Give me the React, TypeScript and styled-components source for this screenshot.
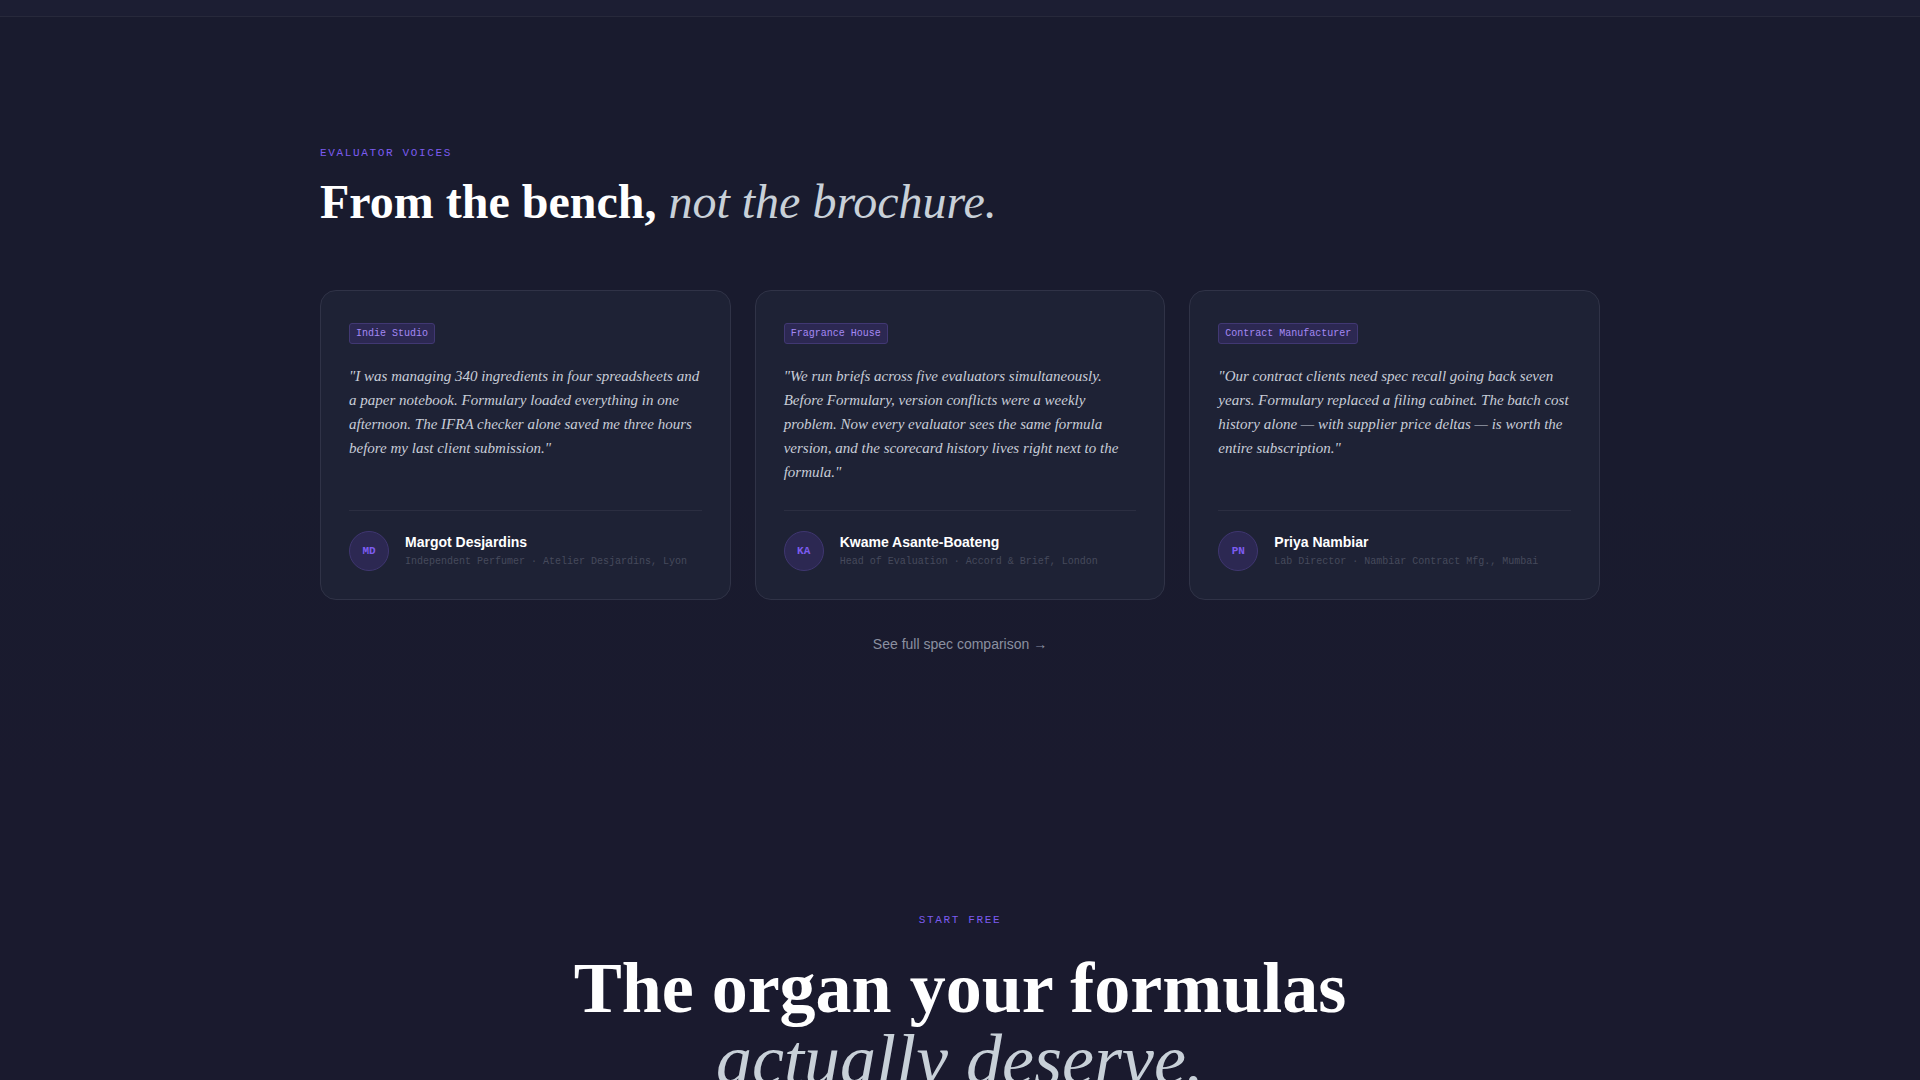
import React from "react";
import styled, { createGlobalStyle } from "styled-components";

const serif = '"Liberation Serif", "Times New Roman", serif';
const sans = '"Liberation Sans", Arial, sans-serif';
const mono = '"Liberation Mono", "Courier New", monospace';

const GlobalStyle = createGlobalStyle`
  *, *::before, *::after { box-sizing: border-box; }
  body { margin: 0; background: #1a1a2e; color: #fff; font-family: ${sans}; }
  h2, p, blockquote, figure { margin: 0; }
`;

const PreviousSection = styled.div`
  height: 17px;
  background: #1c1e33;
  border-bottom: 1px solid #27293b;
`;

const Section = styled.section`
  padding: 128px 40px;
  background: linear-gradient(#191b2e 60%, #1a1a2e);
`;

const Container = styled.div`
  max-width: 1280px;
  margin: 0 auto;
`;

const Eyebrow = styled.p`
  font: 400 11px/16px ${mono};
  letter-spacing: 0.15em;
  text-transform: uppercase;
  color: #7c5cf0;
`;

const Heading = styled.h2`
  margin-top: 13px;
  font: 700 48px/56px ${serif};
  em { font-weight: 400; color: #c8d0d8; }
`;

const Cards = styled.div`
  display: grid;
  grid-template-columns: repeat(3, 1fr);
  gap: 24px;
  margin-top: 60px;
`;

const Card = styled.figure`
  display: flex;
  flex-direction: column;
  align-items: flex-start;
  padding: 32px 28px 28px;
  background: #1e2235;
  border: 1px solid #303347;
  border-radius: 16px;
`;

const Tag = styled.span`
  padding: 3px 6px;
  font: 400 10px/13px ${mono};
  color: #a488f4;
  background: #2c2852;
  border: 1px solid #413873;
  border-radius: 3px;
`;

const Quote = styled.blockquote`
  flex: 1;
  margin: 20px 0 26px;
  font: italic 400 15px/24px ${serif};
  color: #c8cdd8;
`;

const Author = styled.figcaption`
  display: flex;
  align-items: center;
  align-self: stretch;
  gap: 16px;
  padding-top: 20px;
  border-top: 1px solid #2b2e41;
`;

const Avatar = styled.span`
  display: grid;
  place-items: center;
  width: 40px;
  height: 40px;
  font: 700 11px/16px ${mono};
  color: #7c5cf0;
  background: #2c2852;
  border: 1px solid #3f3670;
  border-radius: 50%;
`;

const Name = styled.p`
  font: 700 14px/22px ${sans};
`;

const Role = styled.p`
  font: 400 10px/18px ${mono};
  color: #464a5c;
`;

const More = styled.p`
  margin-top: 32px;
  text-align: center;
`;

const MoreLink = styled.a`
  font: 400 14px/24px ${sans};
  color: #8b90a0;
  text-decoration: none;
`;

const Closing = styled.section`
  padding: 128px 40px;
  text-align: center;
`;

const ClosingHeading = styled.h2`
  margin-top: 24px;
  font: 700 72px/72px ${serif};
  em { display: block; font-weight: 400; color: #c8d0d8; }
`;

const voices = [
  {
    tag: "Indie Studio",
    quote:
      "I was managing 340 ingredients in four spreadsheets and a paper notebook. Formulary loaded everything in one afternoon. The IFRA checker alone saved me three hours before my last client submission.",
    initials: "MD",
    name: "Margot Desjardins",
    role: "Independent Perfumer · Atelier Desjardins, Lyon",
  },
  {
    tag: "Fragrance House",
    quote:
      "We run briefs across five evaluators simultaneously. Before Formulary, version conflicts were a weekly problem. Now every evaluator sees the same formula version, and the scorecard history lives right next to the formula.",
    initials: "KA",
    name: "Kwame Asante-Boateng",
    role: "Head of Evaluation · Accord & Brief, London",
  },
  {
    tag: "Contract Manufacturer",
    quote:
      "Our contract clients need spec recall going back seven years. Formulary replaced a filing cabinet. The batch cost history alone — with supplier price deltas — is worth the entire subscription.",
    initials: "PN",
    name: "Priya Nambiar",
    role: "Lab Director · Nambiar Contract Mfg., Mumbai",
  },
];

export default function App() {
  return (
    <>
      <GlobalStyle />
      <PreviousSection />
      <main>
        <Section>
          <Container>
            <Eyebrow>Evaluator Voices</Eyebrow>
            <Heading>
              From the bench, <em>not the brochure.</em>
            </Heading>
            <Cards>
              {voices.map((voice) => (
                <Card key={voice.name}>
                  <Tag>{voice.tag}</Tag>
                  <Quote>{`"${voice.quote}"`}</Quote>
                  <Author>
                    <Avatar>{voice.initials}</Avatar>
                    <div>
                      <Name>{voice.name}</Name>
                      <Role>{voice.role}</Role>
                    </div>
                  </Author>
                </Card>
              ))}
            </Cards>
            <More>
              <MoreLink href="#spec">See full spec comparison →</MoreLink>
            </More>
          </Container>
        </Section>
        <Closing>
          <Eyebrow>Start Free</Eyebrow>
          <ClosingHeading>
            The organ your formulas <em>actually deserve.</em>
          </ClosingHeading>
        </Closing>
      </main>
    </>
  );
}
